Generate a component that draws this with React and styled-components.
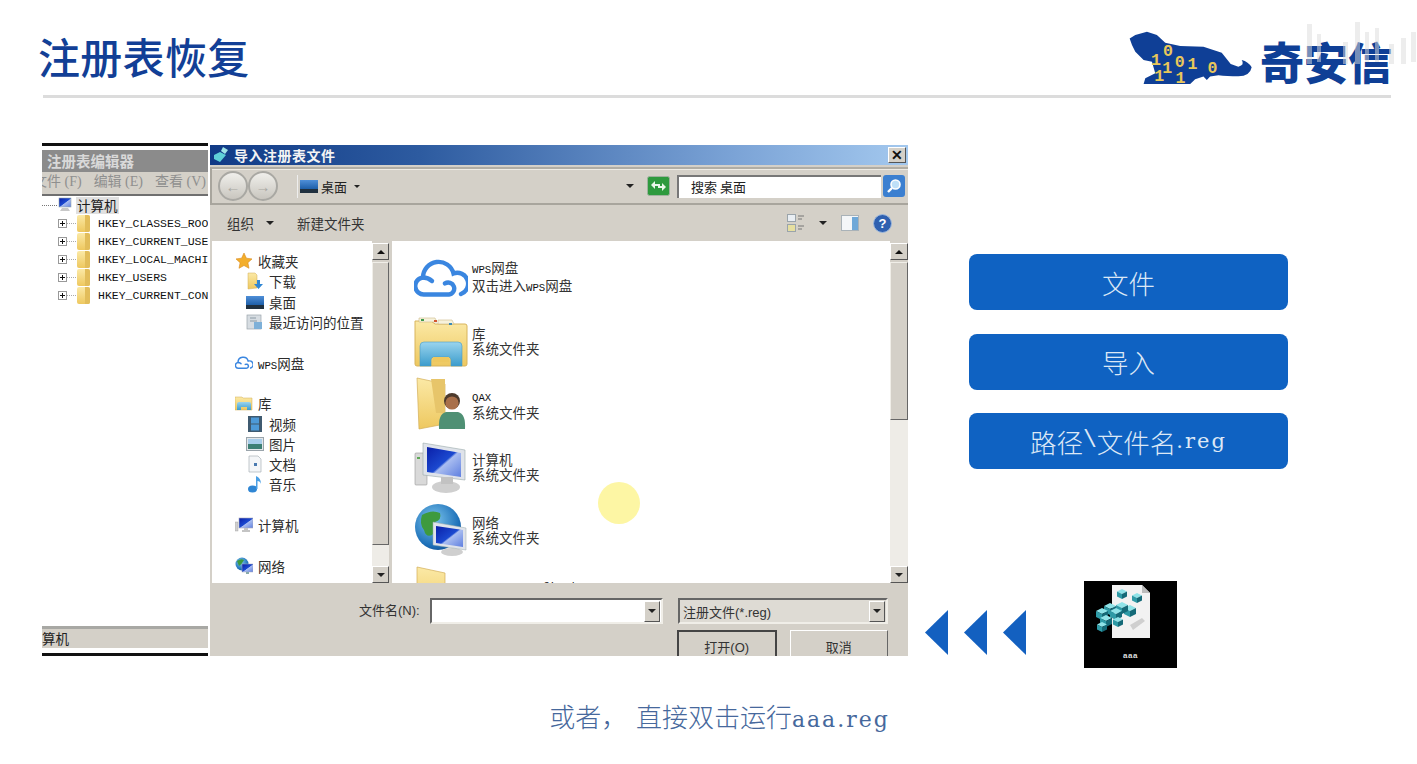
import styled, { createGlobalStyle } from 'styled-components';

const CJK = '"Noto Sans CJK SC", sans-serif';
const MONO = '"Liberation Mono", "Noto Sans CJK SC", monospace';
const SLAB = '"DejaVu Serif", "Noto Sans CJK SC", serif';
const UI = '"Liberation Sans", "Noto Sans CJK SC", sans-serif';

const GlobalStyle = createGlobalStyle`
  html, body {
    margin: 0;
    background: #fff;
  }
  * { box-sizing: border-box; }
`;

const Page = styled.div`
  position: relative;
  width: 1417px;
  height: 764px;
  overflow: hidden;
  background: #fff;
  font-family: ${CJK};
`;

const Header = styled.header`
  display: flex;
  align-items: flex-end;
  justify-content: space-between;
  height: 98px;
  margin: 0 26px 0 43px;
  border-bottom: 3px solid #dcdcdc;
`;

const Title = styled.h1`
  margin: 0 0 14px -5px;
  font-size: 42px;
  line-height: 50px;
  font-weight: 500;
  letter-spacing: 0.3px;
  color: #123f96;
`;

const Logo = styled.div`
  display: flex;
  align-items: flex-end;
  gap: 5px;
  margin: 0 -1px 8px 0;
`;

const LogoName = styled.span`
  margin-bottom: 3px;
  font-size: 44px;
  line-height: 46px;
  font-weight: 900;
  color: #0f3f96;
`;

const Watermark = styled.svg`
  position: absolute;
  right: 0;
  top: 18px;
  opacity: 0.5;
`;

const Main = styled.main`
  display: flex;
  padding-left: 42px;
  margin-top: 45px;
`;

const Screenshot = styled.div`
  position: relative;
  display: flex;
  gap: 2px;
  width: 866px;
  height: 513px;
  flex: none;
`;

const CursorDot = styled.div`
  position: absolute;
  left: 556px;
  top: 339px;
  width: 42px;
  height: 42px;
  border-radius: 50%;
  background: #fdf6a4;
`;

/* registry editor behind the dialog */
const Editor = styled.div`
  display: flex;
  flex-direction: column;
  width: 166px;
  flex: none;
  overflow: hidden;
  background: #fff;
  border-top: 3px solid #111;
  border-bottom: 3px solid #111;
`;

const EditorTitle = styled.div`
  height: 22px;
  margin-top: 4px;
  padding-left: 5px;
  background: #8b8b8b;
  color: #d9d9d9;
  font-size: 14.5px;
  font-weight: 700;
  line-height: 21px;
  white-space: nowrap;
`;

const EditorMenu = styled.div`
  display: flex;
  gap: 12px;
  height: 24px;
  margin-left: -9px;
  background: #d4d0c8;
  border-bottom: 2px solid #6f6f6f;
  color: #8f8f8f;
  font-family: "Liberation Serif", ${CJK};
  font-size: 14px;
  line-height: 20px;
  white-space: nowrap;
`;

const Tree = styled.div`
  flex: 1;
  overflow: hidden;
`;

const TreeRoot = styled.div`
  display: flex;
  align-items: center;
  height: 18px;
  white-space: nowrap;
`;

const TreeRootBox = styled.span`
  width: 15px;
  margin-right: 1px;
  border-top: 1px dotted #777;
  flex: none;
`;

const TreeRootLabel = styled.span`
  margin-left: 4px;
  padding: 0 1px;
  background: #e0e0e0;
  font-size: 13.5px;
  line-height: 17px;
  color: #1c1c1c;
`;

const TreeRow = styled.div`
  display: flex;
  align-items: center;
  height: 18px;
  padding-left: 16px;
  white-space: nowrap;
`;

const Plus = styled.span`
  width: 9px;
  height: 9px;
  flex: none;
  border: 1px solid #999;
  background: linear-gradient(#111, #111) center / 5px 1px no-repeat,
    linear-gradient(#111, #111) center / 1px 5px no-repeat;
`;

const TreeDots = styled.span`
  width: 9px;
  flex: none;
  border-top: 1px dotted #aaa;
`;

const TreeLabel = styled.span`
  margin-left: 7px;
  flex: none;
  font-family: ${MONO};
  font-size: 11.5px;
  color: #111;
`;

const EditorStatus = styled.div`
  height: 22px;
  margin-bottom: 5px;
  background: #d4d0c8;
  border-top: 3px solid #a8a8a4;
  font-size: 13.5px;
  line-height: 19px;
  color: #222;
`;

/* open dialog */
const Dialog = styled.div`
  display: flex;
  flex-direction: column;
  flex: 1;
  margin-top: 2px;
  background: #d4d0c8;
  overflow: hidden;
`;

const DialogTitle = styled.div`
  display: flex;
  align-items: center;
  gap: 4px;
  height: 20px;
  flex: none;
  padding: 0 2px;
  background: linear-gradient(90deg, #103a86 0%, #2d5ba0 30%, #7ba3d6 75%, #a3c8ee 100%);
  color: #f4f4f4;
  font-size: 14px;
  letter-spacing: 0.5px;
  font-weight: 700;
`;

const CloseButton = styled.span`
  display: flex;
  align-items: center;
  justify-content: center;
  width: 18px;
  height: 16px;
  margin-left: auto;
  background: #d4d0c8;
  border: 1px solid;
  border-color: #fff #555 #555 #fff;
  font-family: ${UI};
  font-size: 14px;
  font-weight: 700;
  line-height: 1;
  color: #111;
`;

const AddressBar = styled.div`
  display: flex;
  align-items: center;
  height: 38px;
  margin-top: 2px;
  flex: none;
  padding: 0 3px 0 6px;
  border-top: 2px solid #b0ada5;
  border-bottom: 2px solid #a8a59d;
  border-left: 2px solid #a8a59d;
  box-shadow: inset 0 1px #eeebe4;
`;

const NavCircle = styled.span`
  display: flex;
  align-items: center;
  justify-content: center;
  width: 30px;
  height: 30px;
  border-radius: 50%;
  border: 2px solid #a9a8a3;
  background: linear-gradient(#f0efeb, #c9c6bf);
  color: #a9a8a3;
  font-family: ${UI};
  font-size: 15px;
`;

const AddressField = styled.div`
  display: flex;
  align-items: center;
  width: 349px;
  height: 23px;
  margin-left: 19px;
  padding-left: 2px;
  border-left: 1px solid #eee;
  font-size: 13px;
  color: #222;
`;

const AddressLabel = styled.span`
  margin-left: 3px;
`;

const SmallArrow = styled.span`
  width: 0;
  height: 0;
  margin-left: ${(p) => p.$gap || 0}px;
  border-left: ${(p) => p.$size || 4}px solid transparent;
  border-right: ${(p) => p.$size || 4}px solid transparent;
  border-top: ${(p) => p.$size || 4}px solid #222;
`;

const RefreshIcon = styled.svg`
  margin-left: 2px;
  flex: none;
`;

const SearchField = styled.div`
  width: 204px;
  height: 23px;
  margin-left: 7px;
  padding-left: 12px;
  background: #fff;
  border-top: 2px solid #777;
  border-left: 2px solid #777;
  font-size: 13px;
  line-height: 20px;
  color: #222;
  flex: none;
`;

const SearchIcon = styled.svg`
  margin-left: 2px;
  flex: none;
`;

const Toolbar = styled.div`
  display: flex;
  align-items: center;
  height: 36px;
  flex: none;
  padding: 0 16px 0 17px;
  font-size: 13.5px;
  color: #333;
`;

const NewFolder = styled.span`
  margin-left: 23px;
`;

const ToolbarRight = styled.div`
  display: flex;
  align-items: center;
  gap: 14px;
  margin-left: auto;
`;

const Browser = styled.div`
  display: flex;
  height: 342px;
  flex: none;
`;

const NavPane = styled.div`
  width: 160px;
  margin-left: 2px;
  padding: 10px 0 0 23px;
  background: #fff;
  flex: none;
  overflow: hidden;
`;

const NavGroup = styled.div`
  margin-bottom: 20.3px;
`;

const NavItem = styled.div`
  display: flex;
  align-items: center;
  gap: 5px;
  height: 20.3px;
  padding-left: ${(p) => (p.$child ? 11 : 0)}px;
  font-size: 13.5px;
  color: #2c2c2c;
  white-space: nowrap;
`;

const LatinSmall = styled.span`
  font-family: ${MONO};
  font-size: 10.7px;
  color: #111;
`;

const Scrollbar = styled.div`
  display: flex;
  flex-direction: column;
  width: ${(p) => p.$width}px;
  flex: none;
  background: #d4d0c8;
  padding-top: 2px;
`;

const ScrollButton = styled.span`
  display: flex;
  align-items: center;
  justify-content: center;
  height: 17px;
  flex: none;
  background: #d4d0c8;
  border: 1px solid;
  border-color: #fff #555 #555 #fff;
`;

const ArrowUp = styled.span`
  width: 0;
  height: 0;
  border-left: 4px solid transparent;
  border-right: 4px solid transparent;
  border-bottom: 4px solid #111;
`;

const ScrollThumb = styled.span`
  height: ${(p) => p.$height}px;
  flex: none;
  margin-top: 2px;
  background: #d4d0c8;
  border: 1px solid;
  border-color: #f0eee8 #666 #666 #f0eee8;
`;

const ScrollTrack = styled.span`
  flex: 1;
  background: #eeece7;
`;

const FileList = styled.div`
  flex: 1;
  margin-left: 3px;
  padding: 5px 0 0 21px;
  background: #fff;
  overflow: hidden;
`;

const FileRow = styled.div`
  display: flex;
  align-items: center;
  height: 63px;
`;

const FileIcon = styled.div`
  display: flex;
  align-items: center;
  justify-content: center;
  width: 56px;
  height: 56px;
  flex: none;
`;

const FileText = styled.div`
  margin-left: 3px;
  font-size: 13.5px;
  line-height: 14.5px;
  color: #333;
  white-space: nowrap;
`;

const FilePanel = styled.div`
  display: grid;
  grid-template-columns: 233px 210px;
  column-gap: 15px;
  row-gap: 6px;
  flex: 1;
  padding: 15px 0 0 220px;
  position: relative;
  font-family: ${UI};
  font-size: 13px;
  color: #333;
`;

const FileLabel = styled.span`
  position: absolute;
  left: 149px;
  top: 17px;
`;

const Combo = styled.div`
  display: flex;
  align-items: center;
  justify-content: space-between;
  height: 26px;
  padding: 0 1px 0 3px;
  background: ${(p) => (p.$white ? '#fff' : '#dedbd4')};
  border: 2px solid;
  border-color: #666 #f0eee8 #f0eee8 #666;
`;

const ComboButton = styled.span`
  display: flex;
  align-items: center;
  justify-content: center;
  width: 16px;
  height: 21px;
  background: #d4d0c8;
  border: 1px solid;
  border-color: #fff #555 #555 #fff;
`;

const DialogButtons = styled.div`
  display: flex;
  gap: 13px;
  grid-column: 2;
  margin-left: -1px;
`;

const DialogButton = styled.span`
  display: flex;
  align-items: center;
  justify-content: center;
  width: ${(p) => p.$width}px;
  height: 30px;
  padding-top: 3px;
  border-style: solid;
  border-width: ${(p) => (p.$primary ? '2px' : '1px')};
  border-color: ${(p) => (p.$primary ? '#444' : '#fff #666 #666 #fff')};
`;

/* right column */
const Side = styled.aside`
  display: flex;
  flex-direction: column;
  height: 525px;
  margin-left: 17px;
`;

const Steps = styled.div`
  display: flex;
  flex-direction: column;
  gap: 23.5px;
  padding: 111px 0 0 44px;
`;

const StepButton = styled.div`
  display: flex;
  align-items: center;
  justify-content: center;
  width: 319px;
  height: 56px;
  border-radius: 8px;
  background: #0f62c2;
  color: #dce8f6;
  font-size: 26.5px;
  font-weight: 300;
`;

const Latin = styled.span`
  font-family: ${SLAB};
  font-size: 21px;
  letter-spacing: 2px;
`;

const Backslash = styled.span`
  font-family: ${MONO};
  font-size: 23px;
`;

const ImportRow = styled.div`
  display: flex;
  align-items: flex-start;
  margin-top: auto;
`;

const Arrows = styled.div`
  display: flex;
  gap: 16px;
  margin-top: 29px;
`;

const ArrowLeft = styled.span`
  width: 23px;
  height: 45px;
  background: #1360c0;
  clip-path: polygon(100% 0, 100% 100%, 0 50%);
`;

const RegThumb = styled.div`
  display: flex;
  flex-direction: column;
  align-items: center;
  width: 93px;
  height: 87px;
  margin-left: 58px;
  background: #000;
`;

const RegName = styled.span`
  margin-top: 6px;
  font-family: ${UI};
  font-size: 8px;
  line-height: 9px;
  font-weight: 700;
  letter-spacing: 0.5px;
  color: #ddd;
`;

const Caption = styled.p`
  height: 34px;
  margin: 31px 0 0;
  padding-left: 22px;
  text-align: center;
  font-size: 26px;
  font-weight: 300;
  line-height: 34px;
  word-spacing: 3px;
  color: #46689c;
`;

const CaptionLatin = styled.span`
  font-family: ${SLAB};
  font-size: 22px;
  letter-spacing: 2px;
`;

function Gradients() {
  return (
    <svg width="0" height="0" style={{ position: 'absolute' }}>
      <defs>
        <linearGradient id="fold" x1="0" y1="0" x2="0" y2="1">
          <stop offset="0" stopColor="#fbe9a6" />
          <stop offset="1" stopColor="#eec85f" />
        </linearGradient>
        <linearGradient id="screen" x1="0" y1="0" x2="1" y2="1">
          <stop offset="0" stopColor="#0a1fa8" />
          <stop offset="0.5" stopColor="#1b49d0" />
          <stop offset="0.55" stopColor="#a9bdf0" />
          <stop offset="1" stopColor="#5e7fe0" />
        </linearGradient>
        <linearGradient id="desk" x1="0" y1="0" x2="0" y2="1">
          <stop offset="0" stopColor="#4f8fd8" />
          <stop offset="0.7" stopColor="#1d5ea8" />
          <stop offset="0.72" stopColor="#20303f" />
          <stop offset="1" stopColor="#20303f" />
        </linearGradient>
        <radialGradient id="earth" cx="0.4" cy="0.35" r="0.8">
          <stop offset="0" stopColor="#7ec7ee" />
          <stop offset="0.7" stopColor="#1c6fb8" />
          <stop offset="1" stopColor="#0e3f7a" />
        </radialGradient>
        <linearGradient id="arch" x1="0" y1="0" x2="0" y2="1">
          <stop offset="0" stopColor="#9ad4ee" />
          <stop offset="1" stopColor="#3b9ccc" />
        </linearGradient>
      </defs>
    </svg>
  );
}

function CloudIcon({ size = 54 }) {
  return (
    <svg width={size} height={size * 0.74} viewBox="0 0 54 40" fill="none" stroke="#3a86e0" strokeWidth="4.4" strokeLinecap="round">
      <path d="M31 25.5A6 6 0 1 1 35 36.5H10.5A8.5 8.5 0 0 1 9 19.5A15.5 15.5 0 0 1 39.5 15.5A10.5 10.5 0 0 1 47 36" />
      <path d="M9 19.5Q14 19.5 18 23" />
    </svg>
  );
}

function LibraryIcon({ size = 54 }) {
  return (
    <svg width={size} height={size} viewBox="0 0 54 54">
      <path d="M1 7h16l4 3h30q2 0 2 2v38q0 2-2 2H3q-2 0-2-2z" fill="url(#fold)" stroke="#d8b45c" />
      <path d="M5 4h16l2 4H5zM24 6h14l2 4H24z" fill="#f7f2dc" stroke="#cdbb86" strokeWidth="0.6" />
      <rect x="7" y="5" width="3" height="2" fill="#3c9a4c" />
      <rect x="20" y="6" width="3" height="2" fill="#d4562f" />
      <rect x="35" y="9" width="3" height="2" fill="#3a8ab8" />
      <path d="M6 52V32q0-4 4-4h34q4 0 4 4v20H37v-6q0-3-3-3H20q-3 0-3 3v6z" fill="url(#arch)" stroke="#4a9cc4" strokeWidth="0.6" />
      <rect x="19" y="43" width="16" height="5" fill="#eec85f" />
    </svg>
  );
}

function UserFolderIcon({ size = 54 }) {
  return (
    <svg width={size} height={size} viewBox="0 0 54 54">
      <path d="M3 1l28 6v40l-26 5z" fill="url(#fold)" stroke="#d3ad57" strokeWidth="0.7" />
      <path d="M17 2h14v34H22z" fill="#e7c56a" />
      <circle cx="38" cy="24" r="8" fill="#4d3a2c" />
      <circle cx="38" cy="26" r="6.6" fill="#a9704a" />
      <path d="M25 52q-1-15 7-17h12q8 2 7 17z" fill="#4f9074" />
    </svg>
  );
}

function ComputerIcon({ size = 54 }) {
  return (
    <svg width={size} height={size} viewBox="0 0 54 54">
      <rect x="1" y="13" width="12" height="32" rx="1" fill="#d9d9d9" stroke="#999" strokeWidth="0.6" />
      <rect x="3" y="17" width="3" height="2" fill="#5ea857" />
      <ellipse cx="32" cy="47" rx="14" ry="6" fill="#cfcfcf" />
      <path d="M9 3l42 7v30L9 35z" fill="#dfe3ea" stroke="#9aa" strokeWidth="0.6" />
      <path d="M13 7l34 6v24L13 32z" fill="url(#screen)" />
      <path d="M27 37h12v7H27z" fill="#c2c2c2" />
    </svg>
  );
}

function GlobeIcon({ size = 54 }) {
  return (
    <svg width={size} height={size} viewBox="0 0 54 54">
      <circle cx="24" cy="24" r="23" fill="url(#earth)" />
      <path d="M8 12q10-6 18-2 2 7-5 9 3 8-3 13-6 3-8-5-5-6-2-15zM30 30q8-3 14 0-2 10-10 14-6-6-4-14z" fill="#3e9a3e" />
      <ellipse cx="38" cy="49" rx="11" ry="4" fill="#cfcfcf" />
      <path d="M19 19l33 6v22l-33-5z" fill="#dfe3ea" stroke="#9aa" strokeWidth="0.5" />
      <path d="M22 23l27 4v17l-27-4z" fill="url(#screen)" />
    </svg>
  );
}

function FolderCutIcon({ size = 54 }) {
  return (
    <svg width={size} height={size} viewBox="0 0 54 54">
      <path d="M3 1l28 6v40l-28 4z" fill="url(#fold)" stroke="#d3ad57" strokeWidth="0.7" />
    </svg>
  );
}

function TreeFolder() {
  return (
    <svg width="15" height="19" viewBox="0 0 15 19" style={{ flex: 'none' }}>
      <path d="M1 3q0-2 2-2h9q2 0 2 2v13q0 2-2 2H3q-2 0-2-2z" fill="url(#fold)" />
      <path d="M9 1h3q2 0 2 2v13q0 2-2 2H9z" fill="#e2bd5a" />
    </svg>
  );
}

function SmallMonitor() {
  return (
    <svg width="14" height="16" viewBox="0 0 14 16" style={{ flex: 'none' }}>
      <rect x="1" y="1" width="12" height="9" fill="url(#screen)" stroke="#9aa" strokeWidth="0.6" />
      <path d="M4 11h6l2 3H2z" fill="#c8c8c8" />
    </svg>
  );
}

function NavIcon({ type }) {
  const box = { width: 18, height: 18, viewBox: '0 0 18 18' };
  switch (type) {
    case 'star':
      return (
        <svg {...box}>
          <path d="M9 1l2.4 5.2 5.6.7-4.1 3.8 1.1 5.6L9 13.5l-5 2.8 1.1-5.6L1 6.9l5.6-.7z" fill="#f3ae2b" stroke="#d98a1c" strokeWidth="0.6" />
        </svg>
      );
    case 'download':
      return (
        <svg {...box}>
          <path d="M2 1h7l2 2v13l-9 1z" fill="url(#fold)" stroke="#d3ad57" strokeWidth="0.5" />
          <path d="M11 8h3v4h3l-4.5 5L8 12h3z" fill="#2f86d4" />
        </svg>
      );
    case 'desktop':
      return (
        <svg {...box}>
          <rect x="0" y="3" width="18" height="13" fill="url(#desk)" />
        </svg>
      );
    case 'recent':
      return (
        <svg {...box}>
          <rect x="1" y="2" width="14" height="14" fill="#d7dde2" stroke="#9aa4ab" strokeWidth="0.7" />
          <path d="M4 5h6M4 8h7" stroke="#8b9aa5" />
          <rect x="8" y="9" width="8" height="7" fill="#7eb0d8" />
        </svg>
      );
    case 'cloud':
      return <CloudIcon size={18} />;
    case 'library':
      return (
        <svg {...box}>
          <path d="M0 3h7l1 1h9v12H0z" fill="url(#fold)" stroke="#d3ad57" strokeWidth="0.5" />
          <path d="M2 16v-6q0-2 2-2h10q2 0 2 2v6h-4v-3H6v3z" fill="url(#arch)" />
        </svg>
      );
    case 'video':
      return (
        <svg {...box}>
          <rect x="2" y="1" width="14" height="16" fill="#3f5a70" />
          <rect x="5" y="2.5" width="8" height="6" fill="#4d9ad8" />
          <rect x="5" y="9.5" width="8" height="6" fill="#4d9ad8" />
        </svg>
      );
    case 'image':
      return (
        <svg {...box}>
          <rect x="0.5" y="2.5" width="17" height="13" fill="#e3e7ea" stroke="#9aa4ab" />
          <rect x="2" y="4" width="14" height="5" fill="#a8cdea" />
          <rect x="2" y="9" width="14" height="5" fill="#3d7f74" />
        </svg>
      );
    case 'doc':
      return (
        <svg {...box}>
          <path d="M3 1h9l3 3v13H3z" fill="#f4f6f8" stroke="#a9b2b8" strokeWidth="0.7" />
          <rect x="8" y="8" width="3" height="3" fill="#4a7ab0" />
        </svg>
      );
    case 'music':
      return (
        <svg {...box}>
          <ellipse cx="6.5" cy="14" rx="4.5" ry="3.5" fill="#2f86d4" />
          <path d="M10 14V1q5 2 5 8-1-3-3.5-3V14z" fill="#4aa0e6" />
        </svg>
      );
    case 'computer':
      return (
        <svg {...box}>
          <rect x="0" y="6" width="3" height="9" fill="#d0d0d0" stroke="#999" strokeWidth="0.4" />
          <rect x="4" y="2" width="14" height="10" fill="url(#screen)" stroke="#aab" strokeWidth="0.6" />
          <path d="M9 12h4v2h2v2H7v-2h2z" fill="#c4c4c4" />
        </svg>
      );
    default:
      return (
        <svg {...box}>
          <circle cx="7" cy="7" r="6.5" fill="url(#earth)" />
          <path d="M2 4q4-3 7-1-2 4-5 6z" fill="#3e9a3e" />
          <rect x="7" y="7" width="11" height="8" fill="url(#screen)" stroke="#aab" strokeWidth="0.5" />
          <path d="M11 15h3v2h-3z" fill="#8aa" />
        </svg>
      );
  }
}

function TigerLogo() {
  const digits = [
    [122, 165, '1'], [158, 138, '0'], [156, 190, '1'], [194, 172, '0'],
    [232, 176, '1'], [132, 214, '1'], [196, 218, '1'], [292, 188, '0'],
  ];
  return (
    <svg width="128" height="57" viewBox="50 60 385 171">
      <path
        d="M58 85L75 75L110 65L140 75L165 98L210 108L280 110L335 128L362 162L385 170Q405 165 395 150Q415 155 425 172Q420 199 385 199Q350 199 325 196L300 200L290 210L280 200L255 208L240 222L100 222L105 205L135 190L125 155L100 150L75 125L65 105Z"
        fill="#0f3f96"
      />
      {digits.map(([x, y, d], i) => (
        <text key={i} x={x} y={y} fontFamily="Liberation Mono, monospace" fontWeight="700" fontSize="50" fill="#e9c75a">
          {d}
        </text>
      ))}
    </svg>
  );
}

function RegIcon() {
  const cube = (x, y, s, key) => (
    <g key={key}>
      <path d={`M${x} ${y - s}L${x + s} ${y - s / 2}L${x} ${y}L${x - s} ${y - s / 2}Z`} fill="#8fe3e8" />
      <path d={`M${x - s} ${y - s / 2}L${x} ${y}V${y + s}L${x - s} ${y + s / 2}Z`} fill="#2e9aa6" />
      <path d={`M${x + s} ${y - s / 2}L${x} ${y}V${y + s}L${x + s} ${y + s / 2}Z`} fill="#156a78" />
    </g>
  );
  const cubes = [
    [38, 13, 5], [53, 17, 5], [46, 30, 6], [38, 27, 6], [26, 28, 6], [18, 33, 6],
    [32, 33, 6], [22, 40, 6], [34, 41, 5], [18, 46, 5],
  ];
  return (
    <svg width="93" height="64" viewBox="0 0 93 64">
      <path d="M28 4h30l8 8v45H28z" fill="#f2f2f2" />
      <path d="M58 4v8h8z" fill="#bbb" />
      <path d="M46 44l12-7 3 3-12 9z" fill="#cfcfcf" />
      {cubes.map(([x, y, s], i) => cube(x, y, s, i))}
    </svg>
  );
}

const navGroups = [
  [
    ['star', '收藏夹'],
    ['download', '下载', true],
    ['desktop', '桌面', true],
    ['recent', '最近访问的位置', true],
  ],
  [['cloud', <><LatinSmall>WPS</LatinSmall>网盘</>]],
  [
    ['library', '库'],
    ['video', '视频', true],
    ['image', '图片', true],
    ['doc', '文档', true],
    ['music', '音乐', true],
  ],
  [['computer', '计算机']],
  [['network', '网络']],
];

const files = [
  [CloudIcon, <><LatinSmall>WPS</LatinSmall>网盘</>, <>双击进入<LatinSmall>WPS</LatinSmall>网盘</>],
  [LibraryIcon, '库', '系统文件夹'],
  [UserFolderIcon, <LatinSmall>QAX</LatinSmall>, '系统文件夹'],
  [ComputerIcon, '计算机', '系统文件夹'],
  [GlobeIcon, '网络', '系统文件夹'],
  [FolderCutIcon, <LatinSmall>FunData-Config-data</LatinSmall>, '系统文件夹'],
];

const hives = [
  'HKEY_CLASSES_ROOT',
  'HKEY_CURRENT_USER',
  'HKEY_LOCAL_MACHINE',
  'HKEY_USERS',
  'HKEY_CURRENT_CONFIG',
];

export default function App() {
  return (
    <Page>
      <GlobalStyle />
      <Gradients />
      <Header>
        <Title>注册表恢复</Title>
        <Logo>
          <TigerLogo />
          <LogoName>奇安信</LogoName>
        </Logo>
      </Header>
      <Watermark width="112" height="50" viewBox="0 0 112 50" fill="#dcdcdc">
        <rect x="2" y="6" width="5" height="40" />
        <rect x="12" y="16" width="4" height="28" />
        <rect x="38" y="24" width="5" height="22" />
        <rect x="50" y="4" width="5" height="42" />
        <rect x="60" y="14" width="4" height="30" />
        <rect x="70" y="10" width="4" height="34" />
        <rect x="84" y="26" width="5" height="20" />
        <rect x="96" y="20" width="5" height="26" />
        <rect x="106" y="14" width="5" height="30" />
      </Watermark>

      <Main>
        <Screenshot>
          <Editor>
            <EditorTitle>注册表编辑器</EditorTitle>
            <EditorMenu>
              <span>文件 (F)</span>
              <span>编辑 (E)</span>
              <span>查看 (V)</span>
            </EditorMenu>
            <Tree>
              <TreeRoot>
                <TreeRootBox />
                <SmallMonitor />
                <TreeRootLabel>计算机</TreeRootLabel>
              </TreeRoot>
              {hives.map((name) => (
                <TreeRow key={name}>
                  <Plus />
                  <TreeDots />
                  <TreeFolder />
                  <TreeLabel>{name}</TreeLabel>
                </TreeRow>
              ))}
            </Tree>
            <EditorStatus>算机</EditorStatus>
          </Editor>

          <Dialog>
            <DialogTitle>
              <svg width="18" height="18" viewBox="0 0 18 18">
                <path d="M2 9l6-3 6 3-6 7-6-3z" fill="#5fd0d8" />
                <path d="M11 1l5 3-3 4-4-3z" fill="#9fe4e8" />
              </svg>
              导入注册表文件
              <CloseButton>✕</CloseButton>
            </DialogTitle>
            <AddressBar>
              <NavCircle>←</NavCircle>
              <NavCircle>→</NavCircle>
              <AddressField>
                <NavIcon type="desktop" />
                <AddressLabel>桌面</AddressLabel>
                <SmallArrow $size={3} $gap={7} />
                <SmallArrow $gap={266} />
              </AddressField>
              <RefreshIcon width="23" height="20" viewBox="0 0 23 20">
                <rect x="0.5" y="0.5" width="22" height="19" rx="2" fill="#2e9a3e" stroke="#9fb29f" />
                <path d="M4 9l4-4v3h5v2H8v3zM19 11l-4 4v-3h-4v-2h4V7z" fill="#eaf7ea" />
              </RefreshIcon>
              <SearchField>搜索 桌面</SearchField>
              <SearchIcon width="22" height="22" viewBox="0 0 22 22">
                <rect width="22" height="22" rx="3" fill="#3b7fd0" />
                <circle cx="12.5" cy="9.5" r="4.5" fill="#bfe0f8" stroke="#fff" strokeWidth="1.6" />
                <path d="M9 13l-4 4" stroke="#fff" strokeWidth="2.4" />
              </SearchIcon>
            </AddressBar>
            <Toolbar>
              组织
              <SmallArrow $gap={12} />
              <NewFolder>新建文件夹</NewFolder>
              <ToolbarRight>
                <svg width="18" height="18" viewBox="0 0 18 18">
                  <rect x="0.5" y="0.5" width="8" height="7" fill="#e9eef3" stroke="#9aa4ab" />
                  <rect x="0.5" y="10.5" width="8" height="7" fill="#e6dfa0" stroke="#9aa4ab" />
                  <path d="M11 2h6M11 5h4M11 12h6M11 15h4" stroke="#777" />
                </svg>
                <SmallArrow />
                <svg width="18" height="16" viewBox="0 0 18 16">
                  <rect x="0.5" y="0.5" width="17" height="15" fill="#f4f6f8" stroke="#a9b2b8" />
                  <rect x="11" y="2" width="6" height="13" fill="#6fa8d8" />
                </svg>
                <svg width="19" height="19" viewBox="0 0 19 19">
                  <circle cx="9.5" cy="9.5" r="9" fill="#2f60b0" stroke="#9db8dc" />
                  <text x="9.5" y="14" textAnchor="middle" fontFamily="Liberation Sans, sans-serif" fontWeight="700" fontSize="13" fill="#fff">?</text>
                </svg>
              </ToolbarRight>
            </Toolbar>
            <Browser>
              <NavPane>
                {navGroups.map((group, g) => (
                  <NavGroup key={g}>
                    {group.map(([type, label, child]) => (
                      <NavItem key={type} $child={child}>
                        <NavIcon type={type} />
                        <span>{label}</span>
                      </NavItem>
                    ))}
                  </NavGroup>
                ))}
              </NavPane>
              <Scrollbar $width={17}>
                <ScrollButton><ArrowUp /></ScrollButton>
                <ScrollThumb $height={283} />
                <ScrollTrack />
                <ScrollButton><SmallArrow /></ScrollButton>
              </Scrollbar>
              <FileList>
                {files.map(([Icon, name, sub], i) => (
                  <FileRow key={i}>
                    <FileIcon><Icon /></FileIcon>
                    <FileText>
                      <div>{name}</div>
                      <div>{sub}</div>
                    </FileText>
                  </FileRow>
                ))}
              </FileList>
              <Scrollbar $width={18}>
                <ScrollButton><ArrowUp /></ScrollButton>
                <ScrollThumb $height={158} />
                <ScrollTrack />
                <ScrollButton><SmallArrow /></ScrollButton>
              </Scrollbar>
            </Browser>
            <FilePanel>
              <FileLabel>文件名(N):</FileLabel>
              <Combo $white>
                <span />
                <ComboButton><SmallArrow /></ComboButton>
              </Combo>
              <Combo>
                <span>注册文件(*.reg)</span>
                <ComboButton><SmallArrow /></ComboButton>
              </Combo>
              <DialogButtons>
                <DialogButton $primary $width={100}>打开(O)</DialogButton>
                <DialogButton $width={99}>取消</DialogButton>
              </DialogButtons>
            </FilePanel>
          </Dialog>
          <CursorDot />
        </Screenshot>

        <Side>
          <Steps>
            <StepButton>文件</StepButton>
            <StepButton>导入</StepButton>
            <StepButton>路径<Backslash>\</Backslash>文件名<Latin>.reg</Latin></StepButton>
          </Steps>
          <ImportRow>
            <Arrows>
              <ArrowLeft />
              <ArrowLeft />
              <ArrowLeft />
            </Arrows>
            <RegThumb>
              <RegIcon />
              <RegName>aaa</RegName>
            </RegThumb>
          </ImportRow>
        </Side>
      </Main>

      <Caption>或者， 直接双击运行<CaptionLatin>aaa.reg</CaptionLatin></Caption>
    </Page>
  );
}
